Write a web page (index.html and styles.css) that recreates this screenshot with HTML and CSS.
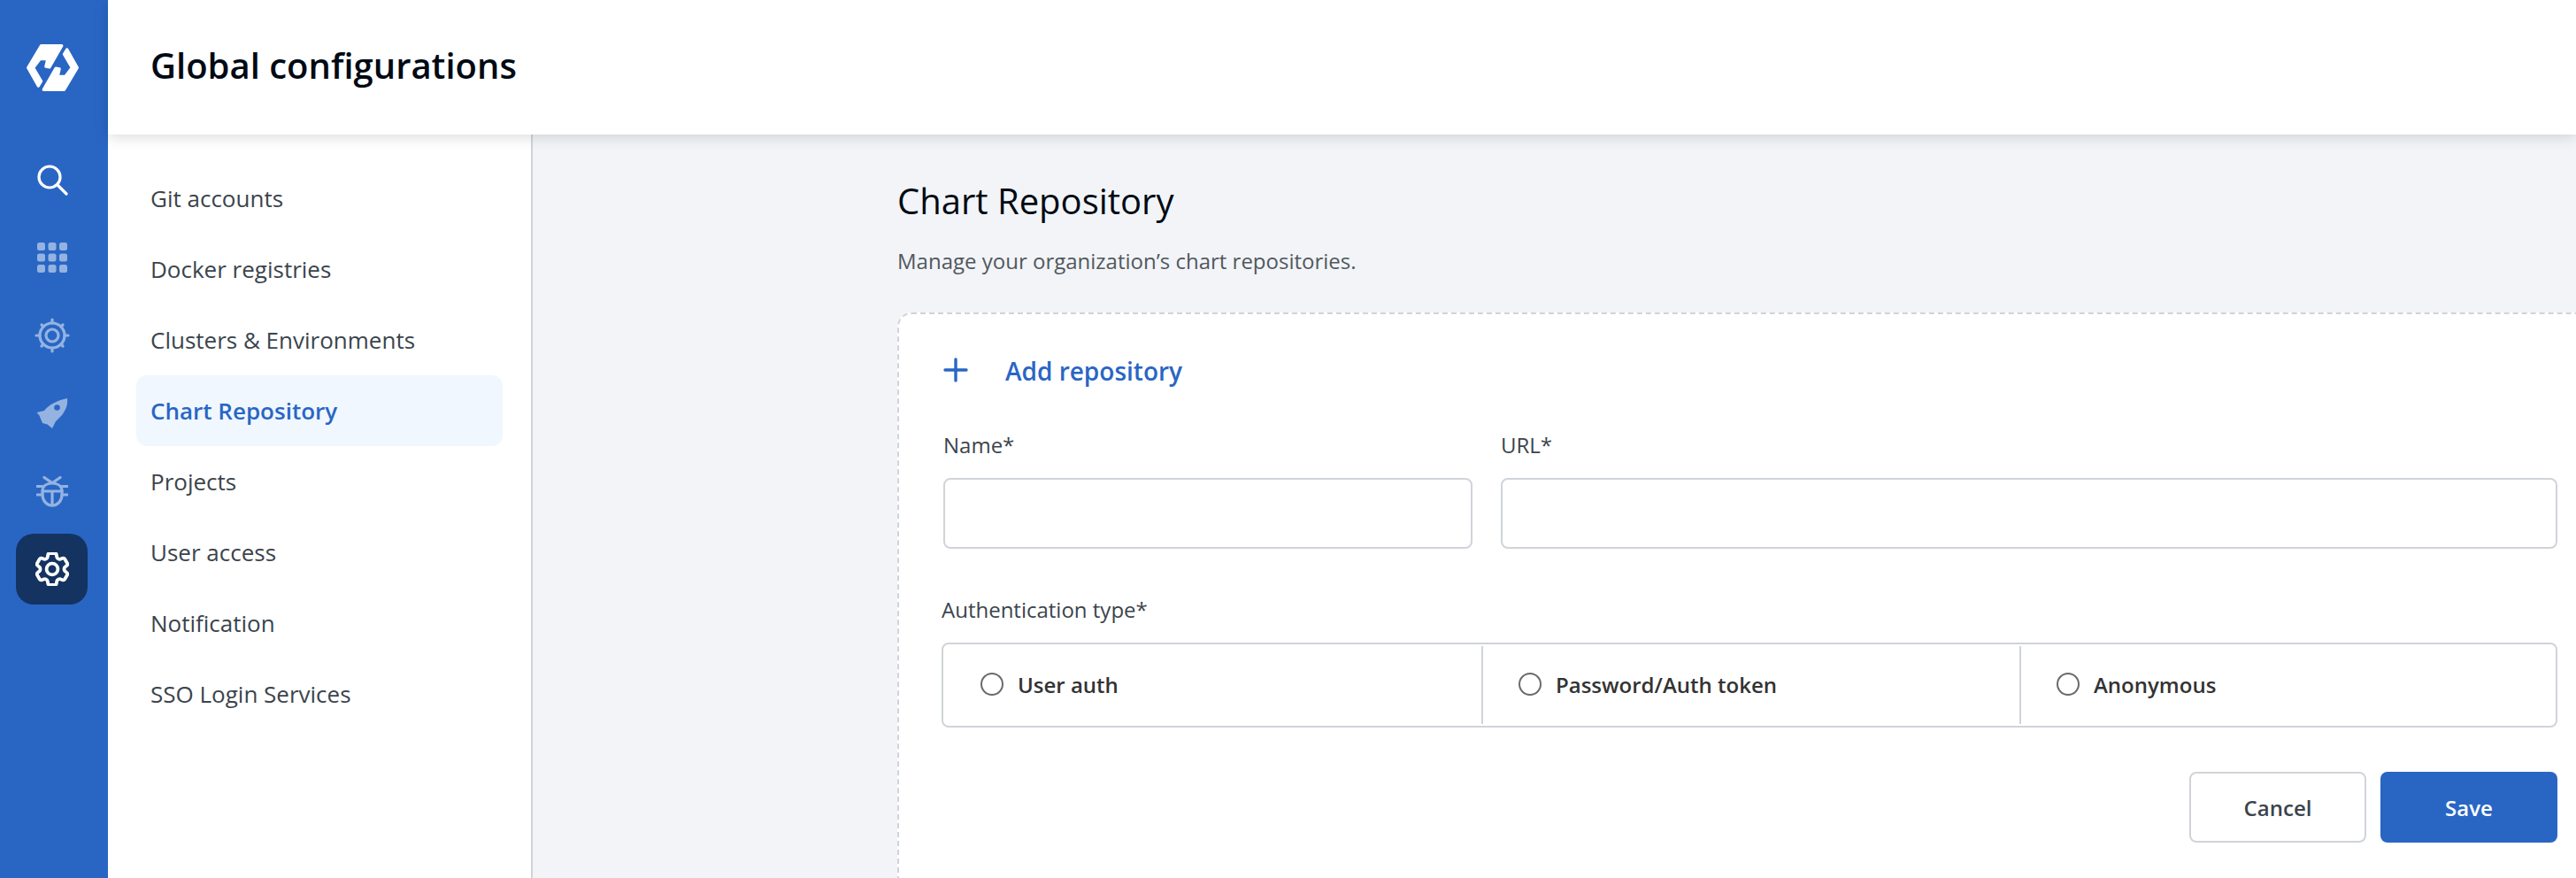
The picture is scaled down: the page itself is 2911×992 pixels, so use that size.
FILE: index.html
```html
<!DOCTYPE html>
<html lang="en">
<head>
    <meta charset="UTF-8">
    <title>Global configurations</title>
    <link rel="stylesheet" href="styles.css">
</head>
<body>
    <aside class="sidebar">
        <div class="logo">
            <svg width="61" height="53" viewBox="0 0 178 160">
                <path class="logo-part" d="M50 5H120L78 78L66 76L72 50H46L23 80L50 126L40 142L5 80Z"/>
                <path class="logo-part" d="M128 155H58L100 82L112 84L106 110H132L155 80L128 34L138 18L173 80Z"/>
            </svg>
        </div>
        <nav class="rail">
            <a class="rail-item">
                <svg width="36" height="36" viewBox="0 0 36 36" fill="none" stroke="#fff" stroke-width="3.2" stroke-linecap="round">
                    <circle cx="15" cy="15" r="12"/>
                    <path d="M24 24L34 34"/>
                </svg>
            </a>
            <a class="rail-item dim">
                <svg width="36" height="36" viewBox="0 0 36 36" fill="#fff">
                    <rect x="1" y="1" width="9" height="9" rx="2.5"/>
                    <rect x="13.5" y="1" width="9" height="9" rx="2.5"/>
                    <rect x="26" y="1" width="9" height="9" rx="2.5"/>
                    <rect x="1" y="13.5" width="9" height="9" rx="2.5"/>
                    <rect x="13.5" y="13.5" width="9" height="9" rx="2.5"/>
                    <rect x="26" y="13.5" width="9" height="9" rx="2.5"/>
                    <rect x="1" y="26" width="9" height="9" rx="2.5"/>
                    <rect x="13.5" y="26" width="9" height="9" rx="2.5"/>
                    <rect x="26" y="26" width="9" height="9" rx="2.5"/>
                </svg>
            </a>
            <a class="rail-item dim">
                <svg width="40" height="40" viewBox="0 0 40 40" fill="none" stroke="#fff" stroke-width="3.2" stroke-linecap="round">
                    <circle cx="20" cy="20" r="14"/>
                    <circle cx="20" cy="20" r="7"/>
                    <path d="M20 2V6M20 34V38M2 20H6M34 20H38M8 8L10 10M30 30L32 32M8 32L10 30M30 10L32 8"/>
                </svg>
            </a>
            <a class="rail-item dim">
                <svg width="36" height="36" viewBox="0 0 36 36">
                    <path fill="#fff" fill-rule="evenodd" d="M35 1C36 10 32 16 29 20L22 27L18 35L12.500 30.500L7 29L3.500 20.500L0.500 17L9 15C14 8 25 3 35 1ZM23.500 8.200A3.300 3.300 0 1 0 23.500 14.800A3.300 3.300 0 1 0 23.500 8.200Z"/>
                </svg>
            </a>
            <a class="rail-item dim">
                <svg width="36" height="36" viewBox="0 0 36 36" fill="none" stroke="#fff" stroke-width="3.2" stroke-linecap="round">
                    <path d="M7 18C7 12 12 9 18 9C24 9 29 12 29 18V22C29 29 24 34 18 34C12 34 7 29 7 22Z"/>
                    <path d="M7 18H29M18 18V34M9 2.500L17 8M27 2.500L19 8M1 12.500H7M29 12.500H35M1 22H7M29 22H35"/>
                </svg>
            </a>
            <a class="rail-item active">
                <svg width="38" height="38" viewBox="2.500 2.500 19 19" fill="none" stroke="#fff" stroke-width="1.900" stroke-linejoin="round">
                    <path d="M9.594 3.94c.09-.542.56-.94 1.11-.94h2.593c.55 0 1.02.398 1.11.94l.213 1.281c.063.374.313.686.645.87.074.04.147.083.22.127.325.196.72.257 1.075.124l1.217-.456a1.125 1.125 0 0 1 1.37.49l1.296 2.247a1.125 1.125 0 0 1-.26 1.431l-1.003.827c-.293.241-.438.613-.43.992a7.723 7.723 0 0 1 0 .255c-.008.378.137.75.43.991l1.004.827c.424.35.534.955.26 1.43l-1.298 2.247a1.125 1.125 0 0 1-1.369.491l-1.217-.456c-.355-.133-.75-.072-1.076.124a6.47 6.47 0 0 1-.22.128c-.331.183-.581.495-.644.869l-.213 1.281c-.09.543-.56.94-1.11.94h-2.594c-.55 0-1.019-.398-1.11-.94l-.213-1.281c-.062-.374-.312-.686-.644-.87a6.52 6.52 0 0 1-.22-.127c-.325-.196-.72-.257-1.076-.124l-1.217.456a1.125 1.125 0 0 1-1.369-.49l-1.297-2.247a1.125 1.125 0 0 1 .26-1.431l1.004-.827c.292-.24.437-.613.43-.991a6.932 6.932 0 0 1 0-.255c.007-.38-.138-.751-.43-.992l-1.004-.827a1.125 1.125 0 0 1-.26-1.43l1.297-2.247a1.125 1.125 0 0 1 1.37-.491l1.216.456c.356.133.751.072 1.076-.124.072-.044.146-.086.22-.128.332-.183.582-.495.644-.869l.214-1.28Z"/>
                    <circle cx="12" cy="12" r="3.200"/>
                </svg>
            </a>
        </nav>
    </aside>

    <div class="page">
        <header class="topbar">
            <h1>Global configurations</h1>
        </header>

        <div class="body-row">
            <nav class="menu">
                <a>Git accounts</a>
                <a>Docker registries</a>
                <a>Clusters &amp; Environments</a>
                <a class="current">Chart Repository</a>
                <a>Projects</a>
                <a>User access</a>
                <a>Notification</a>
                <a>SSO Login Services</a>
            </nav>

            <main class="content">
                <h2>Chart Repository</h2>
                <p class="subtitle">Manage your organization’s chart repositories.</p>

                <section class="card">
                    <div class="add-row">
                        <svg width="28" height="28" viewBox="0 0 28 28" stroke="#2966c4" stroke-width="3.400" stroke-linecap="round">
                            <path d="M14 2V26M2 14H26"/>
                        </svg>
                        <span>Add repository</span>
                    </div>

                    <div class="fields">
                        <label class="field name-field">
                            <span class="field-label">Name*</span>
                            <input type="text">
                        </label>
                        <label class="field url-field">
                            <span class="field-label">URL*</span>
                            <input type="text">
                        </label>
                    </div>

                    <div class="auth-label">Authentication type*</div>
                    <div class="auth-options">
                        <label class="auth-option"><span class="radio"></span>User auth</label>
                        <label class="auth-option"><span class="radio"></span>Password/Auth token</label>
                        <label class="auth-option"><span class="radio"></span>Anonymous</label>
                    </div>

                    <div class="actions">
                        <button class="btn btn-cancel">Cancel</button>
                        <button class="btn btn-save">Save</button>
                    </div>
                </section>
            </main>
        </div>
    </div>
</body>
</html>
```

FILE: styles.css
```css
/* Base */
html, body {
    height: 100%;
}

body {
    display: flex;
    margin: 0;
    overflow: hidden;
    font-family: "Open Sans", sans-serif;
    color: #3b444c;
    background-color: #fff;
}

* {
    box-sizing: border-box;
}

/* Left rail */
.sidebar {
    flex: 0 0 122px;
    background-color: #2966c4;
}

.logo {
    display: flex;
    justify-content: center;
    height: 163px;
    padding: 50px 4px 0 0;
}

.logo-part {
    fill: #fff;
    stroke: #fff;
    stroke-width: 10;
    stroke-linejoin: round;
}

.rail {
    display: flex;
    flex-direction: column;
    gap: 8px;
    padding-left: 18px;
}

.rail-item {
    display: flex;
    align-items: center;
    justify-content: center;
    width: 81px;
    height: 80px;
    border-radius: 20px;
}

.rail-item.dim svg {
    opacity: 0.5;
}

.rail-item.active {
    background-color: #143361;
}

/* Page */
.page {
    flex: 1;
    display: flex;
    flex-direction: column;
    min-width: 0;
}

.topbar {
    position: relative;
    z-index: 1;
    flex: 0 0 152px;
    display: flex;
    align-items: center;
    padding-left: 48px;
    background-color: #fff;
    box-shadow: 0 2px 16px rgba(0, 10, 20, 0.16);
}

.topbar h1 {
    margin: 0 0 6px;
    font-size: 40px;
    font-weight: 600;
    color: #000a14;
}

.body-row {
    flex: 1;
    display: flex;
    min-height: 0;
}

/* Settings menu */
.menu {
    flex: 0 0 480px;
    padding: 32px 32px 0;
    border-right: 2px solid #d0d4d9;
}

.menu a {
    display: flex;
    align-items: center;
    height: 80px;
    padding-left: 16px;
    border-radius: 12px;
    font-size: 26px;
    color: #3b444c;
}

.menu a.current {
    font-weight: 600;
    color: #2966c4;
    background-color: #f0f7ff;
}

/* Content */
.content {
    flex: 1;
    min-width: 0;
    overflow: hidden;
    padding: 47px 0 0 412px;
    background-color: #f2f4f7;
}

.content h2 {
    margin: 0;
    font-size: 40px;
    font-weight: 400;
    line-height: 56px;
    color: #000a14;
}

.subtitle {
    margin: 22px 0 40px;
    font-size: 24px;
    line-height: 36px;
    color: #51585e;
}

.card {
    width: 1926px;
    padding: 49px 48px 100px;
    border: 2px dashed #d0d4d9;
    border-radius: 16px;
    background-color: #fff;
}

.add-row {
    display: flex;
    align-items: center;
    gap: 42px;
    height: 28px;
    padding-left: 2px;
    font-size: 28px;
    line-height: 32px;
    font-weight: 600;
    color: #2966c4;
}

.add-row span {
    padding-top: 2px;
}

.fields {
    display: flex;
    gap: 32px;
    margin-top: 51px;
    padding-left: 2px;
}

.field {
    display: flex;
    flex-direction: column;
}

.name-field {
    flex: 0 0 598px;
}

.url-field {
    flex: 1;
}

.field-label {
    height: 40px;
    font-size: 24px;
    line-height: 40px;
    margin-bottom: 17px;
}

.field input {
    height: 80px;
    border: 2px solid #d0d4d9;
    border-radius: 8px;
    background-color: #fff;
}

.auth-label {
    margin-top: 50px;
    font-size: 24px;
    line-height: 38px;
}

.auth-options {
    display: flex;
    height: 96px;
    margin-top: 18px;
    border: 2px solid #d0d4d9;
    border-radius: 8px;
}

.auth-option {
    flex: 0 0 608px;
    display: flex;
    align-items: center;
    gap: 16px;
    margin: 2px 0;
    padding: 0 0 2px 40px;
    border-right: 2px solid #d0d4d9;
    font-size: 24px;
    font-weight: 600;
    color: #333;
}

.auth-option:first-child {
    flex-basis: 610px;
    padding-left: 42px;
}

.auth-option:last-child {
    flex: 1;
    border-right: none;
}

.radio {
    width: 26px;
    height: 26px;
    border: 2px solid #6b6b6b;
    border-radius: 50%;
}

.actions {
    display: flex;
    justify-content: flex-end;
    gap: 16px;
    margin-top: 50px;
}

.btn {
    width: 200px;
    height: 80px;
    border-radius: 8px;
    font-family: "Open Sans", sans-serif;
    font-size: 24px;
    font-weight: 600;
}

.btn-cancel {
    border: 2px solid #d0d4d9;
    color: #3b444c;
    background-color: #fff;
}

.btn-save {
    border: none;
    color: #fff;
    background-color: #2966c4;
}
```
